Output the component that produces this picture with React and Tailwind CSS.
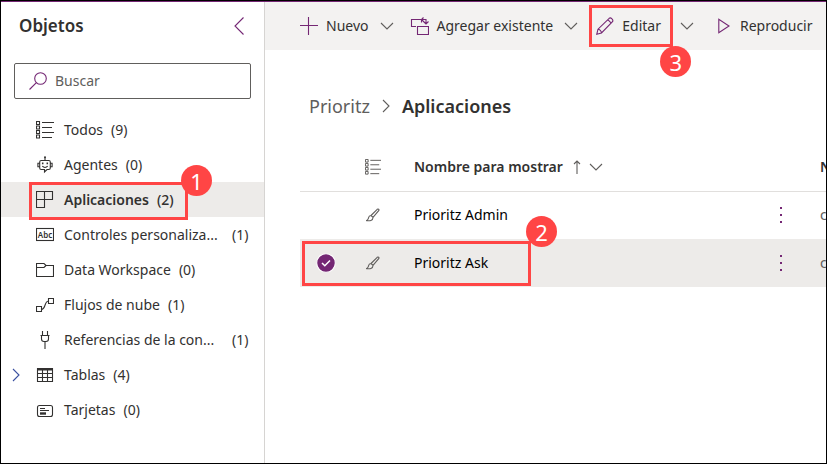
import React from "react";

const FONT = "font-['Noto_Sans','Open_Sans',sans-serif]";

function Svg({ w = 18, h = 18, className = "", children }) {
  return (
    <svg
      width={w}
      height={h}
      viewBox={`0 0 ${w} ${h}`}
      fill="none"
      stroke="currentColor"
      strokeWidth="1.1"
      className={`shrink-0 ${className}`}
      aria-hidden="true"
    >
      {children}
    </svg>
  );
}

function ListIcon({ className }) {
  return (
    <Svg className={className}>
      <path d="M6 1.5h12M6 6.5h10M6 11.500h12M6 16.500h10" />
      <path d="M.5.500h3v3h-3zM.500 5h3v3h-3zM.500 9.500h3v3h-3zM.500 14h3v3h-3z" />
    </Svg>
  );
}

function BotIcon() {
  return (
    <Svg>
      <path d="M9 1.500v3M5.200 4.500h7.600a1.500 1.500 0 0 1 1.500 1.500v6a1.500 1.500 0 0 1-1.500 1.500H11L8.500 16v-2.500H5.200A1.500 1.500 0 0 1 3.700 12V6a1.500 1.500 0 0 1 1.500-1.500zM3.700 7.200H1.900v3.600h1.800M14.300 7.200h1.800v3.600h-1.800M6.300 10.200c1.500 1.500 3.900 1.500 5.400 0" />
      <path d="M6.700 6.600v1.600M11.300 6.600v1.600" strokeWidth="1.500" />
      <circle cx="9" cy="1.200" r="1" fill="currentColor" stroke="none" />
    </Svg>
  );
}

function AppsIcon() {
  return (
    <Svg>
      <path d="M.5.500h16v8h-8v8h-8zM.500 8.500h8M8.500.500v8" />
    </Svg>
  );
}

function AbcIcon() {
  return (
    <Svg>
      <rect x=".500" y="2.500" width="17" height="12" />
      <text x="9" y="11.500" textAnchor="middle" fontSize="8" fontWeight="600" fill="currentColor" stroke="none">
        Abc
      </text>
    </Svg>
  );
}

function FolderIcon() {
  return (
    <Svg>
      <path d="M.500 15.500v-13h7.500l2 2h7.500v11zM.500 6.500h7.500l2-2" />
    </Svg>
  );
}

function FlowIcon() {
  return (
    <Svg>
      <path d="M.500 10.500h5v5h-5zM12.500 2.500h5v5h-5zM5.500 13.500c4.500-.500 2.500-8 7-8.500" />
    </Svg>
  );
}

function PlugIcon() {
  return (
    <Svg>
      <path d="M6.500 0v4M11.500 0v4M4.500 4.500h9M5.500 4.500v3.500c0 1.700 1 2.500 2.500 2.500h2c1.500 0 2.500-.800 2.500-2.500V4.500M9 10.500V18" />
    </Svg>
  );
}

function TableIcon() {
  return (
    <Svg>
      <path d="M1.500 2.500h15v13h-15zM1.500 7.500h15M1.500 11.500h15M6.500 4v11.500M11.500 4v11.500" />
      <path d="M1.500 3.500h15" strokeWidth="2" />
    </Svg>
  );
}

function CardIcon() {
  return (
    <Svg>
      <rect x="1.500" y="4.500" width="15" height="11" rx="2" />
      <path d="M4 7.500h5M4 9.500h9" />
      <path d="M4 12.500h6" strokeWidth="2.400" />
    </Svg>
  );
}

function ChevronDown({ className = "" }) {
  return (
    <Svg w={14} h={8} className={className}>
      <path d="M1 1l6 6 6-6" />
    </Svg>
  );
}

function BrushIcon() {
  return (
    <Svg w={14} h={14}>
      <path d="M5 7.500 11.200 1.300c1-.8 2.300.200 1.500 1.400L7 9.300M5 7.500l2 1.800M5 7.500c-2.500-.2-2.300 2.200-2.800 3.400-.3.700-.900 1.300-1.600 1.700 2.800.500 6.600.300 6.400-3.300" />
    </Svg>
  );
}

function Badge({ n, className }) {
  return (
    <span
      className={`absolute z-10 flex size-[31px] items-center justify-center rounded-full bg-[#ff4545] text-[22px] font-normal leading-none text-white ${className}`}
    >
      {n}
    </span>
  );
}

function Outline({ className }) {
  return <span className={`pointer-events-none absolute z-10 border-3 border-[#ff4545] ${className}`} />;
}

const items = [
  { name: "Todos", count: 9, Icon: ListIcon },
  { name: "Agentes", count: 0, Icon: BotIcon },
  { name: "Aplicaciones", count: 2, Icon: AppsIcon, selected: true },
  { name: "Controles personaliza...", count: 1, Icon: AbcIcon, long: true },
  { name: "Data Workspace", count: 0, Icon: FolderIcon },
  { name: "Flujos de nube", count: 1, Icon: FlowIcon },
  { name: "Referencias de la con...", count: 1, Icon: PlugIcon, long: true },
  { name: "Tablas", count: 4, Icon: TableIcon, expandable: true },
  { name: "Tarjetas", count: 0, Icon: CardIcon },
];

function Sidebar() {
  return (
    <aside className="w-[264px] shrink-0 border-r border-[#d6d4d2]">
      <div className="flex h-12 items-center justify-between pl-[18px] pr-5">
        <h2 className="text-[17px] font-semibold">Objetos</h2>
        <button type="button" aria-label="Contraer" className="text-[#742774]">
          <Svg w={10} h={18}>
            <path d="M9.500.500 1 9l8.500 8.500" />
          </Svg>
        </button>
      </div>
      <label className="mx-[13px] mt-[13px] flex h-9 items-center gap-2 rounded-xs border border-[#605e5c] pl-3.5">
        <Svg className="text-[#742774]">
          <circle cx="11.500" cy="6.500" r="5.800" />
          <path d="M7.400 10.600.500 17.500" />
        </Svg>
        <input
          type="text"
          aria-label="Buscar"
          placeholder="Buscar"
          className="min-w-0 flex-1 bg-transparent outline-none placeholder:text-[#605e5c]"
        />
      </label>
      <nav className="mt-[13px]">
        <ul>
          {items.map(({ name, count, Icon, selected, expandable, long }) => (
            <li key={name} className="relative">
              <button
                type="button"
                className={`flex h-[35px] w-full items-center pl-[11px] text-left ${
                  selected ? "bg-[#edebe9] font-semibold" : ""
                }`}
              >
                <span className="flex w-6 text-[#3a50a0]">
                  {expandable && (
                    <Svg w={8} h={14}>
                      <path d="m1 1 6 6-6 6" />
                    </Svg>
                  )}
                </span>
                <Icon />
                <span className={`ml-2.5 whitespace-nowrap ${long ? "w-40" : ""}`}>{name}</span>
                <span className="ml-2 font-medium">
                  <span className={selected ? "" : "font-normal"}>({count})</span>
                </span>
              </button>
              {selected && (
                <>
                  <Outline className="left-7 top-0 h-[38px] w-[159px]" />
                  <Badge n={1} className="-top-[17px] left-[180px]" />
                </>
              )}
            </li>
          ))}
        </ul>
      </nav>
    </aside>
  );
}

function CommandBar() {
  return (
    <div role="toolbar" className="flex h-12 items-center whitespace-nowrap bg-[#f3f2f1] pl-[35px]">
      <button type="button" className="flex items-center gap-2">
        <Svg className="text-[#742774]">
          <path d="M8.500 0v18M0 8.500h18" />
        </Svg>
        Nuevo
        <ChevronDown className="ml-[3px] text-[#605e5c]" />
      </button>
      <button type="button" className="ml-4 flex items-center gap-2">
        <Svg w={19} className="text-[#742774]">
          <path d="M6 9.500H1.500v-7h10v3M7.500 9.500h11v8h-11zM11.500 2.500h4.500v4M13.500 4.500l2.500 2.500 2.500-2.500M13.500.500l-2 2 2 2" />
        </Svg>
        Agregar existente
        <ChevronDown className="ml-[3px] text-[#605e5c]" />
      </button>
      <div className="relative ml-[18px]">
        <button type="button" className="flex items-center gap-2">
          <Svg className="text-[#742774]">
            <path d="M.800 17.200 2 12.200 13.200 1.300c1.600-1.300 4.600 1.600 3.300 3.400L5.500 16zM2 12.200c1.500 0 3.400 1.900 3.500 3.800M11.800 2.700l3.500 3.500" />
          </Svg>
          Editar
        </button>
        <Outline className="-left-[7px] -top-[11px] h-[42px] w-[84px]" />
        <Badge n={3} className="left-16 top-[30px]" />
      </div>
      <button type="button" aria-label="Más opciones de edición" className="ml-[19px]">
        <ChevronDown className="text-[#605e5c]" />
      </button>
      <button type="button" className="ml-6 flex items-center gap-2.5">
        <Svg w={12} h={16} className="text-[#742774]">
          <path d="M.800 1.200v13.600L11 8z" />
        </Svg>
        Reproducir
      </button>
    </div>
  );
}

function AppsTable() {
  const rows = [{ name: "Prioritz Admin" }, { name: "Prioritz Ask", selected: true }];
  return (
    <table className="w-full table-fixed border-collapse text-left">
      <colgroup>
        <col className="w-[52px]" />
        <col className="w-[42px]" />
        <col />
        <col className="w-[62px]" />
        <col className="w-3.5" />
      </colgroup>
      <thead>
        <tr className="h-12 border-b border-[#e1dfdd]">
          <th />
          <th>
            <ListIcon className="mx-auto size-4 text-[#605e5c]" />
          </th>
          <th className="pl-5 font-semibold">
            <button type="button" className="flex items-center gap-2">
              Nombre para mostrar
              <span className="ml-0.5 flex items-center gap-2 text-[#605e5c]">
                <Svg w={8} h={14}>
                  <path d="M4 14V1M1 4l3-3 3 3" />
                </Svg>
                <ChevronDown />
              </span>
            </button>
          </th>
          <th />
          <th className="overflow-hidden pl-2 font-semibold">N</th>
        </tr>
      </thead>
      <tbody className="text-black">
        {rows.map(({ name, selected }) => (
          <tr key={name} className={`h-12 ${selected ? "bg-[#edebe9]" : ""}`}>
            <td className="relative">
              {selected && (
                <>
                  <Svg w={20} h={20} className="mx-auto">
                    <circle cx="10" cy="10" r="9.300" fill="#742774" stroke="#fff" />
                    <path d="m6 10 2.800 2.800L14 7.500" stroke="#fff" strokeWidth="1.500" />
                  </Svg>
                  <Outline className="left-0.5 top-0.5 h-[45px] w-[229px]" />
                  <Badge n={2} className="-top-[23px] left-[226px]" />
                </>
              )}
            </td>
            <td>
              <span className="flex justify-center text-[#605e5c]">
                <BrushIcon />
              </span>
            </td>
            <td className="pl-5">{name}</td>
            <td>
              <button type="button" aria-label="Más comandos" className="mx-auto flex text-[#742774]">
                <Svg w={4} h={18}>
                  <path d="M1 2h2M1 9h2M1 16h2" strokeWidth="2" />
                </Svg>
              </button>
            </td>
            <td className="overflow-hidden pl-2 text-[#605e5c]">c</td>
          </tr>
        ))}
      </tbody>
    </table>
  );
}

export default function App() {
  return (
    <div className={`flex min-h-screen border border-black text-sm text-[#323130] ${FONT}`}>
      <div className="flex min-w-0 flex-1 border-t border-[#742774] bg-white">
        <Sidebar />
        <main className="min-w-0 flex-1 overflow-hidden">
          <CommandBar />
          <nav aria-label="Ruta" className="mt-10 flex h-8 items-center gap-3 pl-11 text-lg">
            <a href="#prioritz" className="text-[#605e5c]">
              Prioritz
            </a>
            <Svg w={8} h={14} className="text-[#605e5c]">
              <path d="m1 1 6 6-6 6" />
            </Svg>
            <span className="font-semibold">Aplicaciones</span>
          </nav>
          <div className="mt-[21px] pl-[35px]">
            <AppsTable />
          </div>
        </main>
      </div>
    </div>
  );
}
